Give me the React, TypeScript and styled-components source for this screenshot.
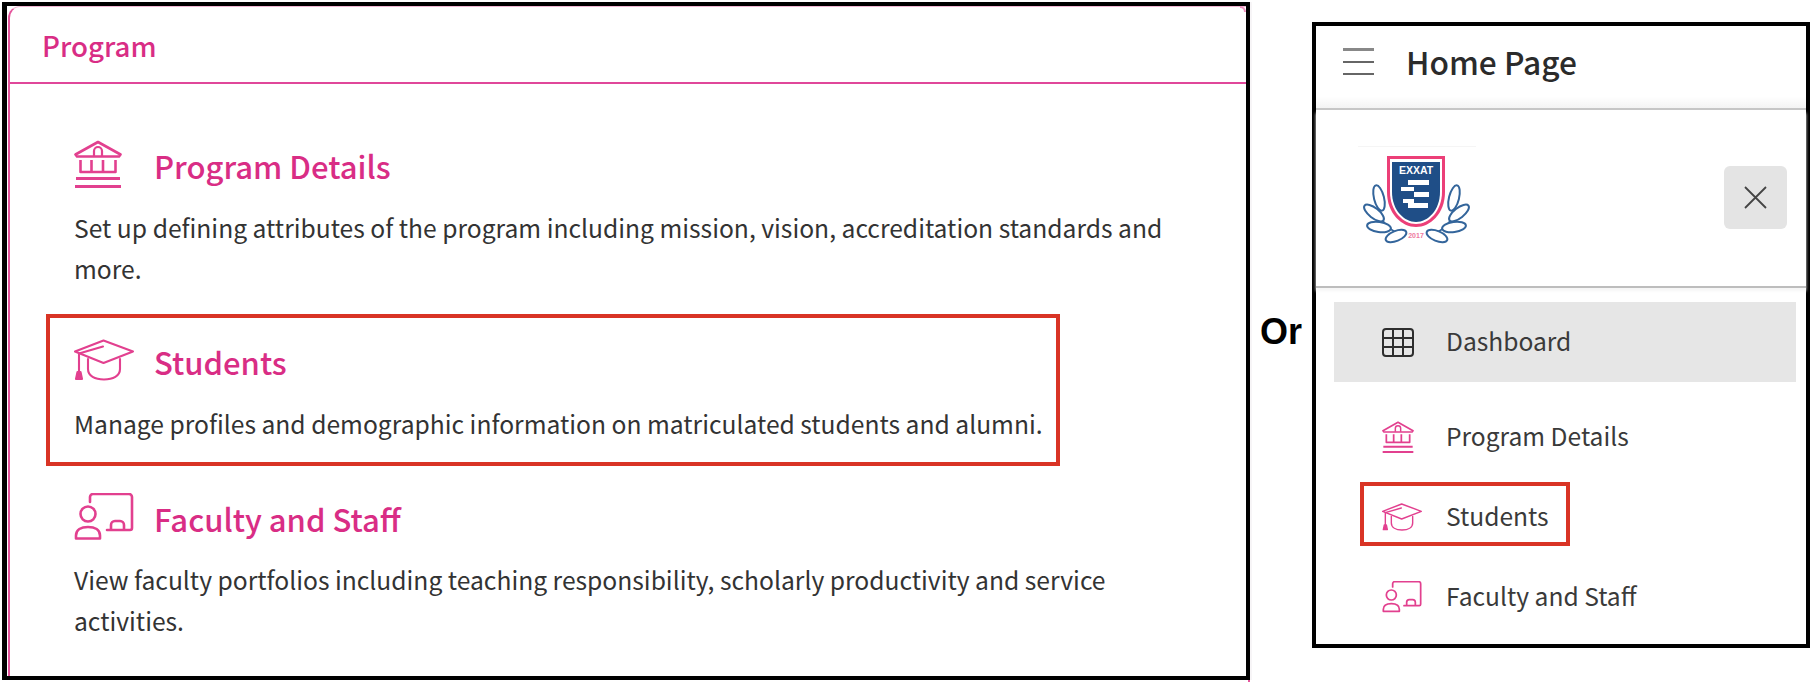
import React from "react";
import styled, { createGlobalStyle } from "styled-components";

const FONT = `"Noto Sans CJK SC", "Noto Sans", sans-serif`;
const PINK = "#d92d85";
const ICON = "#e2408f";

const Global = createGlobalStyle`
  html, body { margin: 0; padding: 0; background: #fff; overflow: hidden; }
  body { font-family: ${FONT}; }
`;

const Page = styled.div`
  display: flex;
  align-items: flex-start;
  width: 1810px;
  height: 682px;
  overflow: hidden;
`;

const Frame = styled.section`
  box-sizing: border-box;
  flex: none;
  width: 1248px;
  height: 678px;
  margin: 2px 0 0 2px;
  border: 4px solid #000;
  border-left-width: 5px;
  padding-left: 1px;
  box-shadow: 2px 0 0 #f7f5f7;
  position: relative;
  &::before {
    content: "";
    position: absolute;
    right: -4px;
    bottom: -6px;
    width: 2px;
    height: 2px;
    background: #e5559c;
  }
  &::after {
    content: "";
    position: absolute;
    right: 0;
    top: 0;
    width: 6px;
    height: 6px;
    border-top: 2px solid #ee8fbd;
    border-right: 2px solid #ee8fbd;
    border-top-right-radius: 8px;
    box-sizing: border-box;
  }
`;

const Card = styled.div`
  box-sizing: border-box;
  height: 100%;
  border-top: 1px solid #f2b6d3;
  border-left: 2px solid #e5559c;
  border-radius: 12px 0 0 0;
`;

const CardHeader = styled.header`
  box-sizing: border-box;
  height: 77px;
  padding: 14px 0 0 32px;
  border-bottom: 2px solid #e0479a;
  color: ${PINK};
  font-size: 27.7px;
  font-weight: 500;
  line-height: 48px;
`;

const List = styled.div`
  display: flex;
  flex-direction: column;
  padding: 56px 0 0 36px;
`;

const Item = styled.article<{ $boxed?: boolean; $top?: number }>`
  box-sizing: border-box;
  margin-top: ${(p) => p.$top ?? 0}px;
  ${(p) =>
    p.$boxed
      ? `width: 1014px; height: 152px; border: 4px solid #d93425; padding: 21px 0 0 24px;`
      : `width: 1150px; padding: 0 0 0 28px;`}
`;

const ItemHead = styled.div<{ $h: number }>`
  display: flex;
  align-items: flex-end;
  height: ${(p) => p.$h}px;
`;

const IconSlot = styled.span`
  display: block;
  flex: none;
  width: 80px;
  svg { display: block; }
`;

const ItemTitle = styled.h2<{ $drop?: number }>`
  margin: 0 0 ${(p) => -(p.$drop ?? 0)}px;
  color: ${PINK};
  font-size: 31px;
  font-weight: 500;
  line-height: 44px;
`;

const Desc = styled.p<{ $top: number }>`
  margin: ${(p) => p.$top}px 0 0;
  color: #333;
  font-size: 24.65px;
  line-height: 41px;
`;

const Separator = styled.div`
  flex: none;
  box-sizing: border-box;
  width: 62px;
  padding: 311px 0 0 10px;
  color: #000;
  font-family: "Liberation Sans", Arial, sans-serif;
  font-size: 36px;
  font-weight: 700;
  line-height: 42px;
`;

const Sidebar = styled.aside`
  box-sizing: border-box;
  flex: none;
  width: 498px;
  height: 626px;
  margin-top: 22px;
  border: 4px solid #000;
`;

const TopBar = styled.header`
  box-sizing: border-box;
  display: flex;
  align-items: center;
  height: 84px;
  padding: 0 0 12px 27px;
  border-bottom: 2px solid #c6c6c6;
  background: linear-gradient(to bottom, #fff 86%, #f3f3f3 100%);
`;

const Burger = styled.span`
  display: flex;
  flex-direction: column;
  justify-content: space-between;
  width: 31px;
  height: 27px;
  margin-right: 32px;
  i { display: block; height: 2px; background: #666; }
  i:first-child { height: 3px; background: #888; }
`;

const PageTitle = styled.h1`
  margin: 0;
  color: #2b2b2b;
  font-size: 31.7px;
  font-weight: 500;
  line-height: 44px;
`;

const BrandRow = styled.div`
  box-sizing: border-box;
  display: flex;
  align-items: flex-start;
  justify-content: space-between;
  height: 178px;
  padding: 36px 19px 0 42px;
  border-bottom: 2px solid #bdbdbd;
  box-shadow: 0 3px 3px #f6f6f6;
`;

const CloseButton = styled.button`
  display: flex;
  align-items: center;
  justify-content: center;
  width: 63px;
  height: 63px;
  margin-top: 20px;
  border: 0;
  border-radius: 6px;
  padding: 0;
  background: #e4e4e4;
  color: #444;
`;

const Nav = styled.nav`
  display: flex;
  flex-direction: column;
  padding: 14px 10px 0 18px;
`;

const NavRow = styled.a<{ $active?: boolean }>`
  position: relative;
  display: flex;
  align-items: center;
  height: 80px;
  padding-left: 48px;
  margin-bottom: ${(p) => (p.$active ? 15 : 0)}px;
  background: ${(p) => (p.$active ? "#e6e6e6" : "transparent")};
  color: #3a3a3a;
  font-size: 24.6px;
  line-height: 34px;
`;

const NavIcon = styled.span`
  display: block;
  flex: none;
  width: 64px;
  svg { display: block; }
`;

const NavLabel = styled.span`
  padding-bottom: 4px;
`;

const Callout = styled.span`
  position: absolute;
  left: 26px;
  top: 5px;
  box-sizing: border-box;
  width: 210px;
  height: 64px;
  border: 4px solid #d93425;
`;

const BankIcon = ({ size }: { size: number }) => (
  <svg width={size} height={size} viewBox="0 0 48 48" fill="none" stroke={ICON} strokeWidth="2.6" strokeLinejoin="round">
    <path d="M1.5 14.5 24 2l22.500 12.500-1.500 2H3z" />
    <path d="M20 16v-5a4 4 0 0 1 8 0v5" strokeWidth="2.2" />
    <path d="M6.500 20v12h35V20M17.500 20v12M29 20v12" />
    <path d="M2 38.500h44M1 46.500h46" strokeWidth="3" />
  </svg>
);

const CapIcon = ({ width }: { width: number }) => (
  <svg width={width} height={(width * 42) / 60} viewBox="0 0 60 42" fill="none" stroke={ICON} strokeWidth="2.1" strokeLinejoin="round" strokeLinecap="round">
    <path d="M1 12.500 29.500 1.500 59 12.500 29.500 24z" />
    <path d="M29 7.500 5 14.500V33" />
    <path d="M14 20v10c0 7 7 10.500 16 10.500S46 37 46 30V20" />
    <path d="M3.500 33h3l1.500 7H2z" fill={ICON} />
  </svg>
);

const BoardIcon = ({ width }: { width: number }) => (
  <svg width={width} height={(width * 47) / 60} viewBox="0 0 60 47" fill="none" stroke={ICON} strokeWidth="2.6" strokeLinejoin="round" strokeLinecap="round">
    <path d="M16 9V4a3 3 0 0 1 3-3h36a3 3 0 0 1 3 3v31a2 2 0 0 1-2 2H33" />
    <path d="M37 36v-4a4 4 0 0 1 4-4h5a4 4 0 0 1 4 4v4" />
    <circle cx="14" cy="21" r="7.500" />
    <path d="M2 45.500v-3c0-5.500 5-8.500 12-8.500s12 3 12 8.500v3z" />
  </svg>
);

const GridIcon = () => (
  <svg width="32" height="29" viewBox="0 0 32 29" fill="none" stroke="#2e2e2e" strokeWidth="2">
    <rect x="1" y="1" width="30" height="27" rx="3" />
    <path d="M1 10h30M1 19h30M11 1v27M21 1v27" />
  </svg>
);

const CloseIcon = () => (
  <svg width="23" height="23" viewBox="0 0 23 23" stroke="currentColor" strokeWidth="1.8">
    <path d="M1 1l21 21M22 1 1 22" />
  </svg>
);

const Leaf = ({ cx, cy, ry, rot }: { cx: number; cy: number; ry: number; rot: number }) => (
  <ellipse cx={cx} cy={cy} rx="5" ry={ry} transform={`rotate(${rot} ${cx} ${cy})`} fill="#fff" stroke="#33659b" strokeWidth="2" />
);

const Laurel = () => (
  <g>
    <path d="M19 58c2 16 11 26 25 31" fill="none" stroke="#33659b" strokeWidth="1.800" />
    <Leaf cx={21} cy={52} ry={13} rot={-14} />
    <Leaf cx={16} cy={67} ry={12} rot={-52} />
    <Leaf cx={21} cy={81} ry={12} rot={-82} />
    <Leaf cx={38} cy={90} ry={11} rot={68} />
  </g>
);

const Logo = () => (
  <svg width="118" height="102" viewBox="0 0 118 102">
    <path d="M0 .5h118" stroke="#f5f5f5" />
    <Laurel />
    <g transform="matrix(-1 0 0 1 117 0)">
      <Laurel />
    </g>
    <path d="M29 10h58v36c0 22-15 35-29 35S29 68 29 46z" fill="#ec3f78" />
    <path d="M32 13h52v33c0 19-13 32-26 32S32 65 32 46z" fill="#fff" />
    <path d="M34 16h48v30c0 18-12 30-24 30S34 64 34 46z" fill="#1f4e87" />
    <text x="58" y="28" textAnchor="middle" fontFamily="'Liberation Sans', sans-serif" fontSize="10.5" fontWeight="700" fill="#fff">EXXAT</text>
    <g fill="#fff">
      <rect x="50" y="34" width="21" height="5" />
      <rect x="43" y="41" width="13" height="4" />
      <rect x="56" y="46" width="15" height="5" />
      <rect x="45" y="53" width="11" height="4" />
      <rect x="50" y="57" width="20" height="5" />
    </g>
    <text x="58" y="92" textAnchor="middle" fontFamily="'Liberation Sans', sans-serif" fontSize="7" fontWeight="700" fill="#ee7a9f">2017</text>
  </svg>
);

export default function App() {
  return (
    <Page>
      <Global />
      <Frame>
        <Card>
          <CardHeader>Program</CardHeader>
          <List>
            <Item>
              <ItemHead $h={48}>
                <IconSlot><BankIcon size={48} /></IconSlot>
                <ItemTitle>Program Details</ItemTitle>
              </ItemHead>
              <Desc $top={19}>
                Set up defining attributes of the program including mission, vision, accreditation standards and more.
              </Desc>
            </Item>
            <Item $boxed $top={25}>
              <ItemHead $h={42}>
                <IconSlot><CapIcon width={60} /></IconSlot>
                <ItemTitle $drop={3}>Students</ItemTitle>
              </ItemHead>
              <Desc $top={22}>
                Manage profiles and demographic information on matriculated students and alumni.
              </Desc>
            </Item>
            <Item $top={27}>
              <ItemHead $h={47}>
                <IconSlot><BoardIcon width={60} /></IconSlot>
                <ItemTitle $drop={1}>Faculty and Staff</ItemTitle>
              </ItemHead>
              <Desc $top={19}>
                View faculty portfolios including teaching responsibility, scholarly productivity and service activities.
              </Desc>
            </Item>
          </List>
        </Card>
      </Frame>
      <Separator>Or</Separator>
      <Sidebar>
        <TopBar>
          <Burger><i /><i /><i /></Burger>
          <PageTitle>Home Page</PageTitle>
        </TopBar>
        <BrandRow>
          <Logo />
          <CloseButton aria-label="Close"><CloseIcon /></CloseButton>
        </BrandRow>
        <Nav>
          <NavRow $active>
            <NavIcon><GridIcon /></NavIcon>
            <NavLabel>Dashboard</NavLabel>
          </NavRow>
          <NavRow>
            <NavIcon><BankIcon size={32} /></NavIcon>
            <NavLabel>Program Details</NavLabel>
          </NavRow>
          <NavRow>
            <NavIcon><CapIcon width={40} /></NavIcon>
            <NavLabel>Students</NavLabel>
            <Callout />
          </NavRow>
          <NavRow>
            <NavIcon><BoardIcon width={40} /></NavIcon>
            <NavLabel>Faculty and Staff</NavLabel>
          </NavRow>
        </Nav>
      </Sidebar>
    </Page>
  );
}
